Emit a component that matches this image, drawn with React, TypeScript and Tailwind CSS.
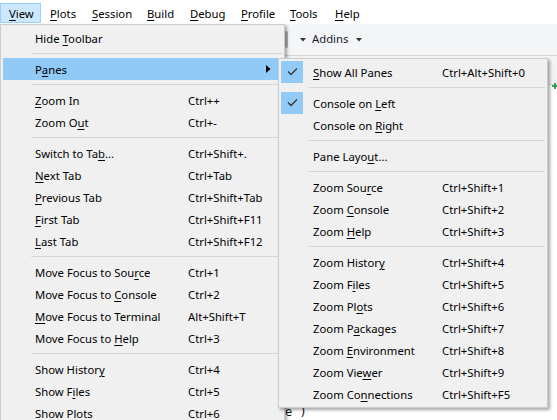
import React from "react";

type Row = { l: string; s?: string; sub?: boolean; hl?: boolean; chk?: boolean } | "sep";

function L({ t }: { t: string }) {
  const i = t.indexOf("&");
  if (i < 0) return <>{t}</>;
  return (
    <>
      {t.slice(0, i)}
      <span className="underline decoration-1 underline-offset-[2px]">{t[i + 1]}</span>
      {t.slice(i + 2)}
    </>
  );
}

const mainRows: Row[] = [
  { l: "Hide &Toolbar" },
  "sep",
  { l: "P&anes", sub: true, hl: true },
  "sep",
  { l: "&Zoom In", s: "Ctrl++" },
  { l: "Zoom O&ut", s: "Ctrl+-" },
  "sep",
  { l: "Switch to Ta&b...", s: "Ctrl+Shift+." },
  { l: "&Next Tab", s: "Ctrl+Tab" },
  { l: "&Previous Tab", s: "Ctrl+Shift+Tab" },
  { l: "&First Tab", s: "Ctrl+Shift+F11" },
  { l: "&Last Tab", s: "Ctrl+Shift+F12" },
  "sep",
  { l: "Move Focus to Sou&rce", s: "Ctrl+1" },
  { l: "Move Focus to &Console", s: "Ctrl+2" },
  { l: "&Move Focus to Terminal", s: "Alt+Shift+T" },
  { l: "Move Focus to &Help", s: "Ctrl+3" },
  "sep",
  { l: "Show Histor&y", s: "Ctrl+4" },
  { l: "Show F&iles", s: "Ctrl+5" },
  { l: "Show Pl&ots", s: "Ctrl+6" },
  { l: "Show Pac&kages", s: "Ctrl+7" },
];

const subRows: Row[] = [
  { l: "&Show All Panes", s: "Ctrl+Alt+Shift+0", chk: true },
  "sep",
  { l: "Console on &Left", chk: true },
  { l: "Console on &Right" },
  "sep",
  { l: "Pane Layo&ut..." },
  "sep",
  { l: "Zoom Sou&rce", s: "Ctrl+Shift+1" },
  { l: "Zoom &Console", s: "Ctrl+Shift+2" },
  { l: "Zoom &Help", s: "Ctrl+Shift+3" },
  "sep",
  { l: "Zoom Histor&y", s: "Ctrl+Shift+4" },
  { l: "Zoom F&iles", s: "Ctrl+Shift+5" },
  { l: "Zoom Pl&ots", s: "Ctrl+Shift+6" },
  { l: "Zoom P&ackages", s: "Ctrl+Shift+7" },
  { l: "Zoom &Environment", s: "Ctrl+Shift+8" },
  { l: "Zoom Vie&wer", s: "Ctrl+Shift+9" },
  { l: "Zoom Co&nnections", s: "Ctrl+Shift+F5" },
];

function Sep() {
  return (
    <div className="h-[9px] flex items-center pl-[28px]">
      <div className="h-px flex-1 bg-[#d7d7d7]" />
    </div>
  );
}

function Check() {
  return (
    <svg width="22" height="22" viewBox="0 0 22 22">
      <path d="M7 10.5 L10 13.5 L16 7.5" fill="none" stroke="#3a3a3a" strokeWidth="1.4" />
    </svg>
  );
}

const menubar = [
  { l: "&View", w: "w-[41px]", open: true },
  { l: "&Plots", w: "w-[42px]" },
  { l: "&Session", w: "w-[55px]" },
  { l: "&Build", w: "w-[43px]" },
  { l: "&Debug", w: "w-[51px]" },
  { l: "&Profile", w: "w-[49px]" },
  { l: "&Tools", w: "w-[45px]" },
  { l: "&Help", w: "w-[42px]" },
];

export default function App() {
  return (
    <div className="relative w-[557px] h-[420px] overflow-hidden bg-white text-black font-['Noto_Sans',sans-serif] text-[11.3px]">
      {/* background application */}
      <div className="flex flex-col h-full">
        <div className="h-[24px] pt-[3px] flex bg-white">
          {menubar.map((m) => (
            <div
              key={m.l}
              className={
                m.w +
                " h-[20px] pl-[8px] pt-[2px] leading-[16px] border " +
                (m.open ? "bg-[#cce8ff] border-[#99d1ff] pl-[7px]" : "border-transparent")
              }
            >
              <L t={m.l} />
            </div>
          ))}
        </div>
        <div className="h-[32px] bg-[#f4f5f6] border-b border-[#d4d4d4] flex items-center pl-[285px]">
          <div className="w-[3px] h-[17px] rounded-sm bg-[#b4b4b4]" />
          <svg width="6" height="4" viewBox="0 0 6 4" className="ml-[12px]">
            <path d="M0 0 H6 L3 3.5 Z" fill="#333" />
          </svg>
          <span className="ml-[6px] text-[#1a1a2a]">Addins</span>
          <svg width="6" height="4" viewBox="0 0 6 4" className="ml-[8px]">
            <path d="M0 0 H6 L3 3.5 Z" fill="#333" />
          </svg>
        </div>
        <div className="flex-1 flex">
          <div className="w-[284px] bg-[#f0f0f0]" />
          <div className="flex-1 flex flex-col">
            <div className="h-[29px] bg-[#f3f3f3] border-b border-[#dadada] flex justify-end items-end">
              <div className="w-[5px] h-[8px] relative translate-y-[6px]">
                <div className="absolute left-[0px] top-[3px] w-[6px] h-[2px] bg-[#2ea44f]" />
                <div className="absolute left-[2px] top-[1px] w-[2px] h-[6px] bg-[#2ea44f]" />
              </div>
            </div>
            <div className="flex-1 bg-white pt-[320px] pl-[1px] font-['DejaVu_Sans_Mono',monospace] text-[12px] leading-[14px] text-[#111]">
              e )
            </div>
          </div>
        </div>
      </div>

      {/* main View menu */}
      <div className="absolute left-0 top-[24px] w-[285px] border border-[#cccccc] bg-[#f0f0f0] p-[2px] shadow-[2px_2px_3px_rgba(0,0,0,0.35)]">
        {mainRows.map((r, i) =>
          r === "sep" ? (
            <Sep key={i} />
          ) : (
            <div key={i} className={"h-[22px] pt-[2px] flex items-center " + (r.hl ? "bg-[#91c9f7]" : "")}>
              <div className="w-[185px] pl-[32px] whitespace-nowrap">
                <L t={r.l} />
              </div>
              <div className="flex-1 whitespace-nowrap">{r.s}</div>
              {r.sub && (
                <svg width="5" height="8" viewBox="0 0 5 8" className="mr-[11px] -mt-[2px]">
                  <path d="M0 0 L4.5 4 L0 8 Z" fill="#000" />
                </svg>
              )}
            </div>
          )
        )}
      </div>

      {/* Panes submenu */}
      <div className="absolute left-[278px] top-[58px] w-[270px] border border-[#cccccc] bg-[#f0f0f0] p-[2px] shadow-[2px_2px_3px_rgba(0,0,0,0.35)]">
        {subRows.map((r, i) =>
          r === "sep" ? (
            <Sep key={i} />
          ) : (
            <div key={i} className="h-[22px] flex items-center">
              <div className="w-[32px] h-[22px]">
                {r.chk && (
                  <div className="w-[22px] h-[22px] bg-[#91c9f7]">
                    <Check />
                  </div>
                )}
              </div>
              <div className="w-[129px] pt-[2px] whitespace-nowrap">
                <L t={r.l} />
              </div>
              <div className="flex-1 pt-[2px] whitespace-nowrap">{r.s}</div>
            </div>
          )
        )}
      </div>
    </div>
  );
}
